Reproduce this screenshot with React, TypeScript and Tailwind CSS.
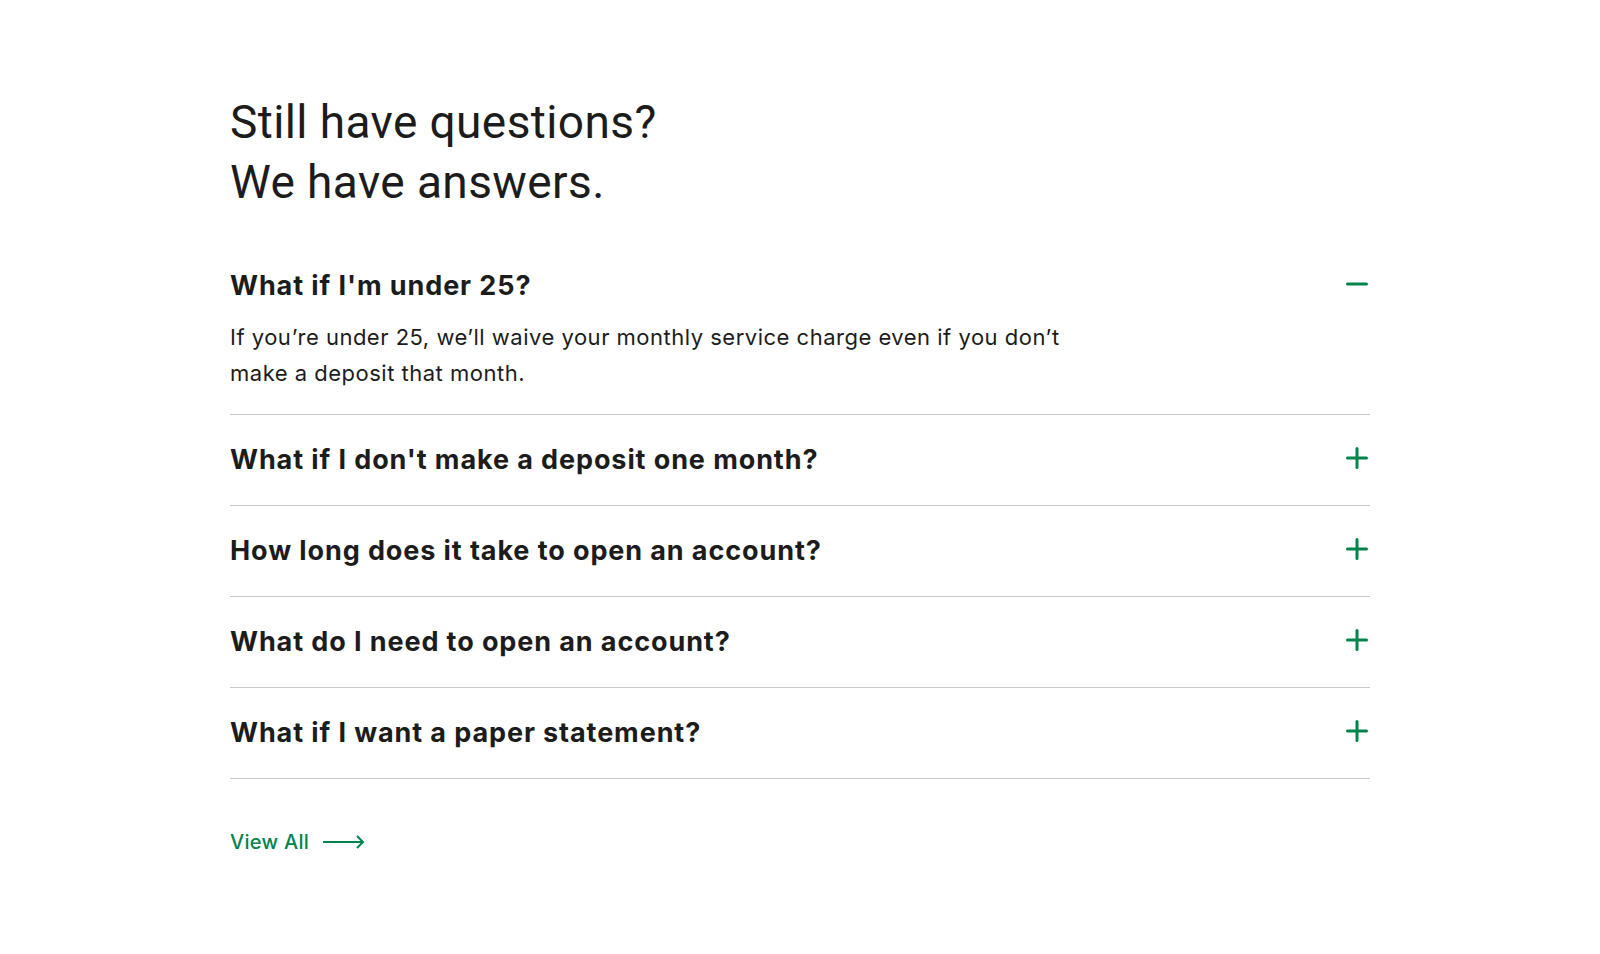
import React, { useState } from "react";

const items = [
  {
    q: "What if I'm under 25?",
    a: "If you’re under 25, we’ll waive your monthly service charge even if you don’t make a deposit that month.",
  },
  { q: "What if I don't make a deposit one month?", a: "" },
  { q: "How long does it take to open an account?", a: "" },
  { q: "What do I need to open an account?", a: "" },
  { q: "What if I want a paper statement?", a: "" },
];

function PlusMinus({ open }: { open: boolean }) {
  return (
    <svg width="22" height="22" viewBox="0 0 22 22" className="mr-[2px] mb-[4px] shrink-0">
      <line x1="1.5" y1="11" x2="20.5" y2="11" stroke="#00844c" strokeWidth="3" strokeLinecap="round" />
      {!open && <line x1="11" y1="1.5" x2="11" y2="20.5" stroke="#00844c" strokeWidth="3" strokeLinecap="round" />}
    </svg>
  );
}

export default function App() {
  const [open, setOpen] = useState(0);
  return (
    <div className="min-h-[954px] bg-white pl-[230px] pt-[92px]" style={{ fontFamily: "Inter, 'Liberation Sans', sans-serif" }}>
      <div className="w-[1140px]">
        <h2 className="text-[46px] leading-[60px] font-normal tracking-[0.4px] text-[#1c1c1c]" style={{ fontFamily: "Roboto, sans-serif" }}>
          Still have questions?
          <br />
          We have answers.
        </h2>
        <div className="mt-[29px]">
          {items.map((it, i) => (
            <div key={i} className="border-b border-[#c9c9c9]">
              <button
                className="flex w-full items-center justify-between pt-[29px] pb-[29px] text-left"
                onClick={() => setOpen(open === i ? -1 : i)}
                style={i === 0 && open === 0 ? { paddingBottom: 0 } : undefined}
              >
                <span className="text-[27px] leading-[32px] font-bold tracking-[0.9px] text-[#1c1c1c]">{it.q}</span>
                <PlusMinus open={open === i} />
              </button>
              {open === i && (
                <p className="mt-[17px] pb-[23px] w-[850px] text-[22px] leading-[36px] tracking-[0.5px] text-[#1c1c1c]">{it.a}</p>
              )}
            </div>
          ))}
        </div>
        <a href="#" className="mt-[49px] flex items-center gap-[14px] text-[20px] leading-[28px] font-medium tracking-[0.3px] text-[#00844c]">
          View All
          <svg width="42" height="14" viewBox="0 0 42 14">
            <line x1="0" y1="7" x2="40" y2="7" stroke="#00844c" strokeWidth="2" />
            <polyline points="34,1 40,7 34,13" fill="none" stroke="#00844c" strokeWidth="2" />
          </svg>
        </a>
      </div>
    </div>
  );
}
